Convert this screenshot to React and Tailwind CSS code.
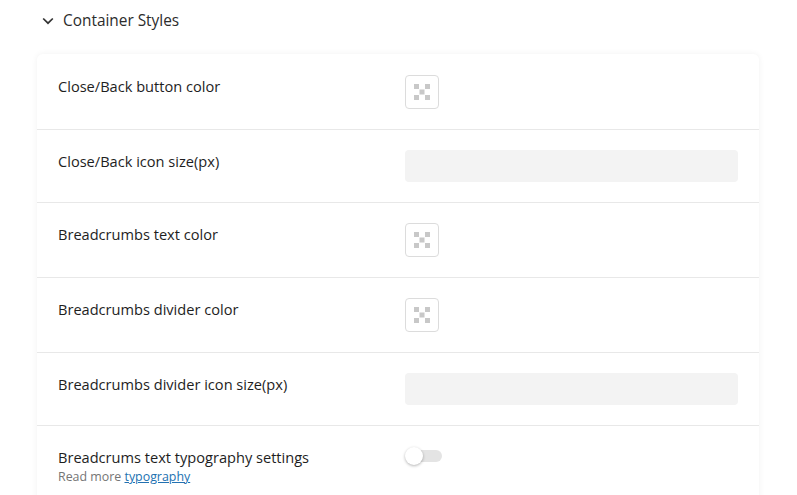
import React from "react";

const rows = [
  { label: "Close/Back button color", type: "color", h: "h-[76px]" },
  { label: "Close/Back icon size(px)", type: "input", h: "h-[73px]" },
  { label: "Breadcrumbs text color", type: "color", h: "h-[75px]" },
  { label: "Breadcrumbs divider color", type: "color", h: "h-[75px]" },
  { label: "Breadcrumbs divider icon size(px)", type: "input", h: "h-[73px]" },
];

function Swatch() {
  return (
    <div className="w-[34px] h-[34px] rounded-[4px] border border-[#dcdcdc] bg-white flex items-center justify-center">
      <svg width="16" height="16" viewBox="0 0 16 16">
        <rect x="0" y="0" width="5" height="5" fill="#c8c8c8" />
        <rect x="11" y="0" width="5" height="5" fill="#c8c8c8" />
        <rect x="5.5" y="5.5" width="5" height="5" fill="#c8c8c8" />
        <rect x="0" y="11" width="5" height="5" fill="#c8c8c8" />
        <rect x="11" y="11" width="5" height="5" fill="#c8c8c8" />
      </svg>
    </div>
  );
}

export default function App() {
  return (
    <div className="w-[797px] h-[495px] bg-white overflow-hidden" style={{ fontFamily: '"Open Sans", "Noto Sans", sans-serif' }}>
      <div className="flex items-center gap-[9px] pl-[42px] pt-[4px] h-[38px]">
        <svg width="12" height="12" viewBox="0 0 12 12" fill="none" stroke="#333" strokeWidth="1.7">
          <path d="M1.2 3.5 L6 8.2 L10.8 3.5" />
        </svg>
        <span className="text-[15.4px] text-[#2c2c2c]">Container Styles</span>
      </div>
      <div className="ml-[37px] mt-[16px] w-[722px] rounded-[6px] bg-white shadow-[0_0_6px_rgba(0,0,0,0.06)]">
        {rows.map((r, i) => (
          <div key={i} className={`flex border-b border-[#e8e8e8] ${r.h}`}>
            <div className={`w-[368px] pl-[21px] text-[14.6px] text-[#1e1e1e] ${i === 0 ? "pt-[22px]" : "pt-[21px]"}`}>{r.label}</div>
            <div className="flex-1 pr-[21px] flex items-center">
              {r.type === "color" ? <Swatch /> : <div className="w-full h-[32px] rounded-[4px] bg-[#f3f3f3]" />}
            </div>
          </div>
        ))}
        <div className="flex h-[80px]">
          <div className="w-[368px] pl-[21px] pt-[21px]">
            <div className="text-[14.6px] text-[#1e1e1e] leading-[21px]">Breadcrums text typography settings</div>
            <div className="text-[12.4px] text-[#757575] leading-[17px]">
              Read more <span className="text-[#2271b1] underline">typography</span>
            </div>
          </div>
          <div className="flex-1 pt-[21px]">
            <div className="relative w-[37px] h-[18px] flex items-center">
              <div className="ml-[4px] w-[33px] h-[12px] rounded-full bg-[#e4e4e4]" />
              <div className="absolute left-0 top-0 w-[18px] h-[18px] rounded-full bg-white shadow-[0_1px_3px_rgba(0,0,0,0.3)]" />
            </div>
          </div>
        </div>
      </div>
    </div>
  );
}
